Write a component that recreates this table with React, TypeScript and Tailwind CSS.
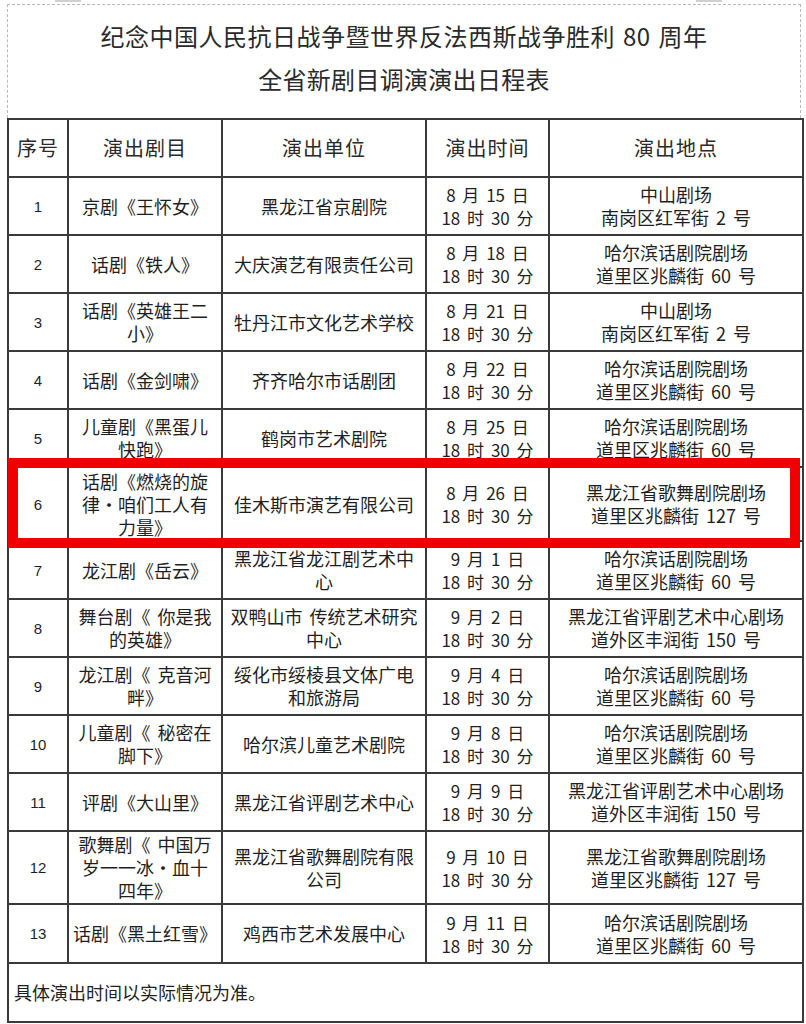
const rows: { no: string; play: string[]; unit: string[]; time: string[]; place: string[]; h: string }[] = [
  { no: '1', play: ['京剧《王怀女》'], unit: ['黑龙江省京剧院'], time: ['8 月 15 日', '18 时 30 分'], place: ['中山剧场', '南岗区红军街 2 号'], h: 'h-[58px]' },
  { no: '2', play: ['话剧《铁人》'], unit: ['大庆演艺有限责任公司'], time: ['8 月 18 日', '18 时 30 分'], place: ['哈尔滨话剧院剧场', '道里区兆麟街 60 号'], h: 'h-[58px]' },
  { no: '3', play: ['话剧《英雄王二', '小》'], unit: ['牡丹江市文化艺术学校'], time: ['8 月 21 日', '18 时 30 分'], place: ['中山剧场', '南岗区红军街 2 号'], h: 'h-[58px]' },
  { no: '4', play: ['话剧《金剑啸》'], unit: ['齐齐哈尔市话剧团'], time: ['8 月 22 日', '18 时 30 分'], place: ['哈尔滨话剧院剧场', '道里区兆麟街 60 号'], h: 'h-[58px]' },
  { no: '5', play: ['儿童剧《黑蛋儿', '快跑》'], unit: ['鹤岗市艺术剧院'], time: ['8 月 25 日', '18 时 30 分'], place: ['哈尔滨话剧院剧场', '道里区兆麟街 60 号'], h: 'h-[58px]' },
  { no: '6', play: ['话剧《燃烧的旋', '律・咱们工人有', '力量》'], unit: ['佳木斯市演艺有限公司'], time: ['8 月 26 日', '18 时 30 分'], place: ['黑龙江省歌舞剧院剧场', '道里区兆麟街 127 号'], h: 'h-[74px]' },
  { no: '7', play: ['龙江剧《岳云》'], unit: ['黑龙江省龙江剧艺术中', '心'], time: ['9 月 1 日', '18 时 30 分'], place: ['哈尔滨话剧院剧场', '道里区兆麟街 60 号'], h: 'h-[58px]' },
  { no: '8', play: ['舞台剧《 你是我', '的英雄》'], unit: ['双鸭山市 传统艺术研究', '中心'], time: ['9 月 2 日', '18 时 30 分'], place: ['黑龙江省评剧艺术中心剧场', '道外区丰润街 150 号'], h: 'h-[58px]' },
  { no: '9', play: ['龙江剧《 克音河', '畔》'], unit: ['绥化市绥棱县文体广电', '和旅游局'], time: ['9 月 4 日', '18 时 30 分'], place: ['哈尔滨话剧院剧场', '道里区兆麟街 60 号'], h: 'h-[58px]' },
  { no: '10', play: ['儿童剧《 秘密在', '脚下》'], unit: ['哈尔滨儿童艺术剧院'], time: ['9 月 8 日', '18 时 30 分'], place: ['哈尔滨话剧院剧场', '道里区兆麟街 60 号'], h: 'h-[58px]' },
  { no: '11', play: ['评剧《大山里》'], unit: ['黑龙江省评剧艺术中心'], time: ['9 月 9 日', '18 时 30 分'], place: ['黑龙江省评剧艺术中心剧场', '道外区丰润街 150 号'], h: 'h-[58px]' },
  { no: '12', play: ['歌舞剧《 中国万', '岁一一冰・血十', '四年》'], unit: ['黑龙江省歌舞剧院有限', '公司'], time: ['9 月 10 日', '18 时 30 分'], place: ['黑龙江省歌舞剧院剧场', '道里区兆麟街 127 号'], h: 'h-[73px]' },
  { no: '13', play: ['话剧《黑土红雪》'], unit: ['鸡西市艺术发展中心'], time: ['9 月 11 日', '18 时 30 分'], place: ['哈尔滨话剧院剧场', '道里区兆麟街 60 号'], h: 'h-[59px]' },
]

function Lines({ items }: { items: string[] }) {
  return (
    <>
      {items.map((t, i) => (
        <div key={i} className="whitespace-nowrap">
          {t}
        </div>
      ))}
    </>
  )
}

const cell = 'border-2 border-[#3a3a3a] p-0 text-center align-middle'

export default function App() {
  return (
    <div className="relative h-[1024px] w-[806px] overflow-hidden bg-white font-['Noto_Sans_CJK_SC','Noto_Sans',sans-serif] text-[#1f1f1f]">
      {/* top handles */}
      <div className="absolute left-[55px] top-0 h-[2px] w-[26px] bg-[#d0d0d0]" />
      <div className="absolute left-[696px] top-0 h-[2px] w-[26px] bg-[#d0d0d0]" />

      <div className="ml-[7px] mt-[4px] h-[114px] w-[794px] border-l border-r border-t border-dashed border-[#b8b8b8] pt-[15px] text-center text-[24px] leading-[32px] text-[#2a2a2a]">
        <div className="tracking-[0.5px] [word-spacing:2px]">纪念中国人民抗日战争暨世界反法西斯战争胜利 80 周年</div>
        <div className="mt-[11px] tracking-[0.3px]">全省新剧目调演演出日程表</div>
      </div>

      <table className="ml-[7px] w-[795px] table-fixed border-collapse">
        <colgroup>
          <col className="w-[60px]" />
          <col className="w-[154px]" />
          <col className="w-[204px]" />
          <col className="w-[123px]" />
          <col className="w-[254px]" />
        </colgroup>
        <thead>
          <tr className="h-[58px] text-[20px] tracking-[1px] text-[#2a2a2a]">
            <th className={cell + ' font-normal'}>序号</th>
            <th className={cell + ' font-normal'}>演出剧目</th>
            <th className={cell + ' font-normal'}>演出单位</th>
            <th className={cell + ' font-normal'}>演出时间</th>
            <th className={cell + ' font-normal'}>演出地点</th>
          </tr>
        </thead>
        <tbody className="text-[18px] leading-[23px] [word-spacing:3px]">
          {rows.map((r) => (
            <tr key={r.no} className={r.h}>
              <td className={cell + " font-['Liberation_Sans',sans-serif] text-[15px]"}>{r.no}</td>
              <td className={cell}>
                <Lines items={r.play} />
              </td>
              <td className={cell}>
                <Lines items={r.unit} />
              </td>
              <td className={cell + ' text-[17px]'}>
                <Lines items={r.time} />
              </td>
              <td className={cell}>
                <Lines items={r.place} />
              </td>
            </tr>
          ))}
          <tr className="h-[59px]">
            <td colSpan={5} className="border-2 border-[#3a3a3a] pl-[5px] text-left align-middle text-[18px]">
              具体演出时间以实际情况为准。
            </td>
          </tr>
        </tbody>
      </table>

      {/* highlight overlay */}
      <div className="absolute left-[8px] top-[458px] h-[90px] w-[792px] border-[10px] border-[#f00000]" />
    </div>
  )
}
